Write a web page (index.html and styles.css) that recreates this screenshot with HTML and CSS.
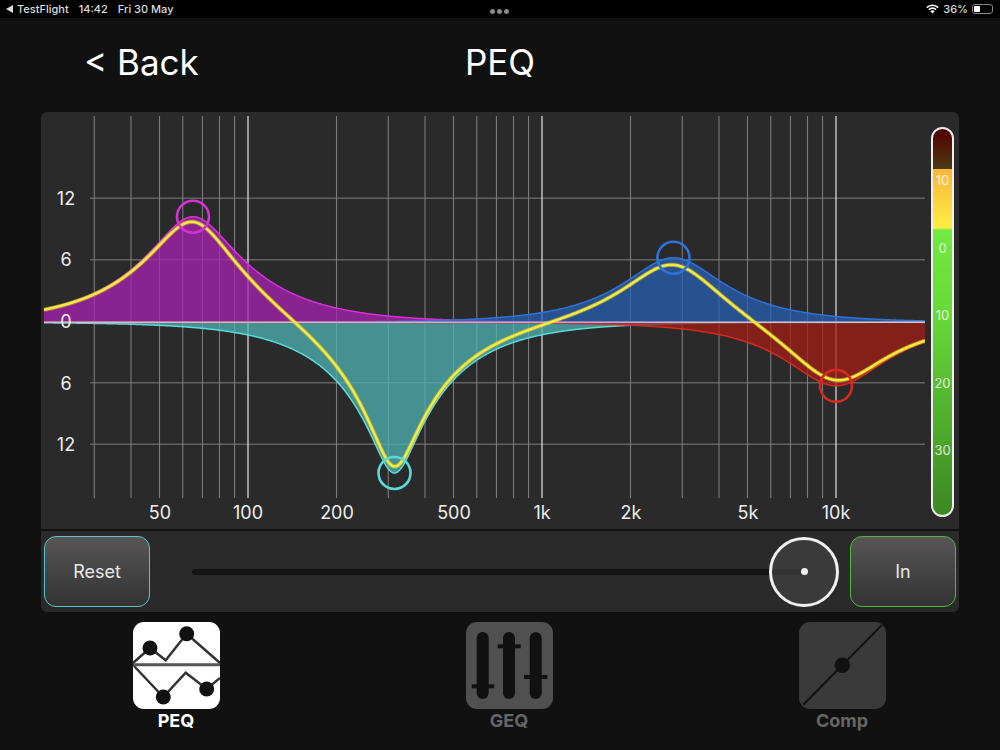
FILE: index.html
```html
<!DOCTYPE html>
<html lang="en">

<head>
    <meta charset="UTF-8">
    <title>PEQ</title>
    <link rel="stylesheet" href="styles.css">
</head>

<body>
    <div class="status-bar">
        <div class="status-left">
            <span class="status-app"><span class="back-arrow"></span>TestFlight</span>
            <span>14:42</span>
            <span>Fri 30 May</span>
        </div>
        <div class="status-dots"><i></i><i></i><i></i></div>
        <div class="status-right">
            <svg class="wifi" width="13" height="10" viewBox="0 0 13 10">
                <path d="M0.8 3.6 A8 8 0 0 1 12.2 3.6" fill="none" stroke="#fff" stroke-width="1.6" />
                <path d="M2.9 5.7 A5 5 0 0 1 10.1 5.7" fill="none" stroke="#fff" stroke-width="1.6" />
                <path d="M4.4 7.3 A3 3 0 0 1 8.6 7.3 L6.5 9.5 Z" fill="#fff" />
            </svg>
            <span>36%</span>
            <div class="battery"><div class="battery-level"></div></div>
        </div>
    </div>

    <div class="header">
        <div class="back">&lt; Back</div>
        <div class="title">PEQ</div>
        <div></div>
    </div>

    <div class="panel graph-panel">
        <svg class="graph" width="884" height="417" viewBox="41 112 884 417">
            <defs>
                <linearGradient id="zero-line" gradientUnits="userSpaceOnUse" x1="44" y1="0" x2="925" y2="0">
                    <stop offset="0" stop-color="#e8b4c8" />
                    <stop offset="0.42" stop-color="#e8a8d0" />
                    <stop offset="0.6" stop-color="#b0a8e8" />
                    <stop offset="0.75" stop-color="#c8c0d0" />
                    <stop offset="1" stop-color="#d0c8c8" />
                </linearGradient>
            </defs>
            <g id="grid"></g>
            <g id="bands"></g>
            <line x1="44" y1="322.3" x2="925" y2="322.3" stroke="url(#zero-line)" stroke-width="1.5" />
            <path id="sum-glow" class="sum-glow" />
            <path id="sum" class="sum" />
            <g id="handles"></g>
            <g class="db-labels">
                <text x="66" y="204.5">12</text>
                <text x="66" y="266">6</text>
                <text x="66" y="328">0</text>
                <text x="66" y="389.5">6</text>
                <text x="66" y="451">12</text>
            </g>
            <g class="freq-labels">
                <text x="160" y="518.5">50</text>
                <text x="248" y="518.5">100</text>
                <text x="337" y="518.5">200</text>
                <text x="454" y="518.5">500</text>
                <text x="542" y="518.5">1k</text>
                <text x="631" y="518.5">2k</text>
                <text x="748" y="518.5">5k</text>
                <text x="836" y="518.5">10k</text>
            </g>
        </svg>
        <div class="meter">
            <span>10</span>
            <span>0</span>
            <span>10</span>
            <span>20</span>
            <span>30</span>
        </div>
    </div>

    <div class="panel control-panel">
        <button class="btn btn-reset">Reset</button>
        <div class="slider">
            <div class="slider-knob"><div class="slider-dot"></div></div>
        </div>
        <button class="btn btn-in">In</button>
    </div>

    <div class="tabs">
        <div class="tab active">
            <svg width="87" height="87" viewBox="0 0 87 87">
                <rect width="87" height="87" rx="11" fill="#fff" />
                <path d="M0 41 L17 26 L32.7 38.3 L53.7 11.7 L87 41" fill="none" stroke="#333" stroke-width="2.5" />
                <path d="M1 44 L30.3 75 L52.7 50.7 L73.7 67 L87 56" fill="none" stroke="#333" stroke-width="2.5" />
                <line x1="0" y1="42.7" x2="87" y2="42.7" stroke="#555" stroke-width="3" />
                <circle cx="17" cy="26" r="7.5" fill="#111" />
                <circle cx="53.7" cy="11.7" r="7.5" fill="#111" />
                <circle cx="30.3" cy="75" r="7.5" fill="#111" />
                <circle cx="73.7" cy="67" r="7.5" fill="#111" />
            </svg>
            <span>PEQ</span>
        </div>
        <div class="tab">
            <svg width="87" height="87" viewBox="0 0 87 87">
                <rect width="87" height="87" rx="11" fill="#505050" />
                <rect x="10.7" y="10" width="12" height="67" rx="6" fill="#111" />
                <rect x="37" y="10" width="12" height="67" rx="6" fill="#111" />
                <rect x="63.7" y="10" width="12" height="67" rx="6" fill="#111" />
                <rect x="5.7" y="62.3" width="22.6" height="4" fill="#111" />
                <rect x="31.7" y="22.3" width="23" height="4" fill="#111" />
                <rect x="58" y="53" width="23.3" height="4" fill="#111" />
            </svg>
            <span>GEQ</span>
        </div>
        <div class="tab">
            <svg width="87" height="87" viewBox="0 0 87 87">
                <rect width="87" height="87" rx="11" fill="#3a3a3a" />
                <line x1="4.3" y1="82.7" x2="82.7" y2="3.3" stroke="#111" stroke-width="2" />
                <circle cx="43.3" cy="43.3" r="7.7" fill="#111" />
            </svg>
            <span>Comp</span>
        </div>
    </div>

    <script src="script.js"></script>
</body>
</html>
```

FILE: styles.css
```css
* {
    box-sizing: border-box;
}

body {
    font-family: Inter, "Liberation Sans", sans-serif;
    margin: 0;
    height: 750px;
    overflow: hidden;
    background-color: #111;
    color: #fff;
}

.status-bar {
    height: 18px;
    background-color: #000;
    color: #ddd;
    font-size: 11px;
    font-weight: 500;
    display: flex;
    align-items: center;
    justify-content: space-between;
    padding: 0 6px;
    position: relative;
}

.status-left {
    display: flex;
    gap: 10px;
}

.status-app {
    display: flex;
    align-items: center;
    gap: 4px;
}

.back-arrow {
    width: 0;
    height: 0;
    border-style: solid;
    border-width: 4px 7px 4px 0;
    border-color: transparent #ddd transparent transparent;
}

.status-dots {
    position: absolute;
    left: 490px;
    top: 9px;
    display: flex;
    gap: 2px;
}

.status-dots i {
    width: 5px;
    height: 5px;
    border-radius: 50%;
    background-color: #8a8a8a;
}

.status-right {
    display: flex;
    align-items: center;
    gap: 4px;
}

.battery {
    width: 21px;
    height: 10px;
    border: 1px solid #888;
    border-radius: 3px;
    padding: 1px;
    margin-right: 1px;
}

.battery-level {
    width: 6px;
    height: 100%;
    background-color: #fff;
    border-radius: 1px;
}

.header {
    height: 94px;
    padding: 0 84px 6px;
    display: grid;
    grid-template-columns: 1fr auto 1fr;
    align-items: center;
    font-size: 35px;
}

.panel {
    width: 918px;
    margin-left: 41px;
    background-color: #2a2a2a;
    border-radius: 6px;
}

.graph-panel {
    height: 417px;
    display: flex;
    align-items: flex-start;
    border-radius: 6px 6px 0 0;
}

.graph {
    display: block;
    flex: none;
}

.sum {
    fill: none;
    stroke: #f2ea3c;
    stroke-width: 2.6;
    stroke-linejoin: round;
}

.sum-glow {
    fill: none;
    stroke: rgba(240, 200, 60, 0.45);
    stroke-width: 4.4;
    stroke-linejoin: round;
}

.db-labels text,
.freq-labels text {
    fill: #eee;
    font-size: 18px;
    text-anchor: middle;
}

.meter {
    width: 23px;
    height: 390px;
    margin: 15px 0 0 6px;
    border: 2px solid #eee;
    border-radius: 12px;
    padding-top: 18px;
    display: flex;
    flex-direction: column;
    align-items: center;
    font-size: 13px;
    color: rgba(255, 255, 255, 0.8);
    background: linear-gradient(to bottom, #520000 0, #4c3a10 40px, #f6b63c 40px, #ffee44 99px, #72ea40 101px, #66d83a 190px, #3c8622 100%);
}

.meter span {
    height: 67.5px;
    line-height: 67.5px;
}

.control-panel {
    height: 81px;
    margin-top: 2px;
    padding: 5px 3px;
    display: flex;
    align-items: center;
    justify-content: space-between;
    border-radius: 0 0 6px 6px;
}

.btn {
    width: 106px;
    height: 71px;
    border-radius: 12px;
    background: linear-gradient(to bottom, #575555, #333);
    color: #e8e8e8;
    font-family: inherit;
    font-size: 18px;
    border: 1.6px solid #5cc4c8;
    flex: none;
}

.btn-in {
    border-color: #52b83c;
}

.slider {
    width: 613px;
    height: 6px;
    margin-left: 42px;
    margin-right: 46px;
    background-color: #141414;
    border-radius: 3px;
    position: relative;
}

.slider-knob {
    position: absolute;
    right: -35px;
    top: -32px;
    width: 70px;
    height: 70px;
    border: 3px solid #f0f0f0;
    border-radius: 50%;
    background-color: rgba(70, 70, 70, 0.6);
    display: flex;
    align-items: center;
    justify-content: center;
}

.slider-dot {
    width: 7px;
    height: 7px;
    border-radius: 50%;
    background-color: #f0f0f0;
}

.tabs {
    display: flex;
    gap: 246px;
    padding: 10px 0 0 132.5px;
}

.tab {
    width: 87px;
    display: flex;
    flex-direction: column;
    align-items: center;
    font-size: 18px;
    font-weight: 700;
    color: #666;
}

.tab svg {
    display: block;
}

.tab span {
    margin-top: 1px;
}

.tab.active {
    color: #fff;
}
```

FILE: script.js
```js
// x is a log frequency scale: 1k sits at 542, one decade is 294px
// y: 0 dB at 322.3, 6 dB is 61.5px
const zeroY = 322.3;
const gridZeroY = 321.3;
const pxPerDb = 10.25;

function freqToX(f) {
    return 542 + 294 * Math.log10(f / 1000);
}

function xToFreq(x) {
    return 1000 * Math.pow(10, (x - 542) / 294);
}

const bands = [
    { f: 65, gain: 10.3, q: 1, color: "#d531d8", fill: "#aa22b2" },
    { f: 315, gain: -14.7, q: 1.4, color: "#5cdada", fill: "#4fb3b3" },
    { f: 2800, gain: 6.3, q: 1, color: "#2f72d8", fill: "#275fb1" },
    { f: 10000, gain: -6.2, q: 1, color: "#d62a20", fill: "#a21e16" }
];

// magnitude of a peaking filter in dB
function bandDb(band, f) {
    const a = Math.pow(10, Math.abs(band.gain) / 40);
    const w = f / band.f;
    const d = (1 - w * w) * (1 - w * w);
    const num = d + Math.pow(w * a / band.q, 2);
    const den = d + Math.pow(w / (a * band.q), 2);
    const db = 10 * Math.log10(num / den);
    return band.gain < 0 ? -db : db;
}

function curvePath(dbAt) {
    let d = "";
    for (let x = 44; x <= 925; x += 1) {
        const y = zeroY - dbAt(xToFreq(x)) * pxPerDb;
        d += (d ? " L" : "M") + x + " " + y.toFixed(2);
    }
    return d;
}

function add(parent, tag, attrs) {
    const el = document.createElementNS("http://www.w3.org/2000/svg", tag);
    for (const key in attrs) {
        el.setAttribute(key, attrs[key]);
    }
    document.getElementById(parent).appendChild(el);
}

function addFreqLine(f, major) {
    const x = freqToX(f);
    add("grid", "line", {
        x1: x, x2: x, y1: 116, y2: 498,
        stroke: major ? "#e4e4e4" : "#7a7a7a",
        "stroke-width": major ? 1.2 : 1.1
    });
}

// grid
[12, 6, -6, -12].forEach(db => {
    const y = gridZeroY - db * pxPerDb;
    add("grid", "line", { x1: 90, x2: 925, y1: y, y2: y, stroke: "#616161", "stroke-width": 1.5 });
});
[10, 100, 1000].forEach(decade => {
    for (let i = 1; i <= 9; i++) {
        if (decade * i >= 30) addFreqLine(decade * i, i === 1);
    }
});
addFreqLine(10000, true);

// bands
bands.forEach(band => {
    const d = curvePath(f => bandDb(band, f));
    add("bands", "path", { d: d + " L925 " + zeroY + " L44 " + zeroY + " Z", fill: band.fill, "fill-opacity": 0.75 });
    add("bands", "path", { d: d, fill: "none", stroke: band.color, "stroke-width": 1.5 });
    add("handles", "circle", {
        cx: freqToX(band.f),
        cy: zeroY - band.gain * pxPerDb,
        r: 16,
        fill: "none",
        stroke: band.color,
        "stroke-width": 2.6
    });
});

// sum of all bands
const sum = curvePath(f => bands.reduce((total, band) => total + bandDb(band, f), 0));
document.getElementById("sum").setAttribute("d", sum);
document.getElementById("sum-glow").setAttribute("d", sum);
```
